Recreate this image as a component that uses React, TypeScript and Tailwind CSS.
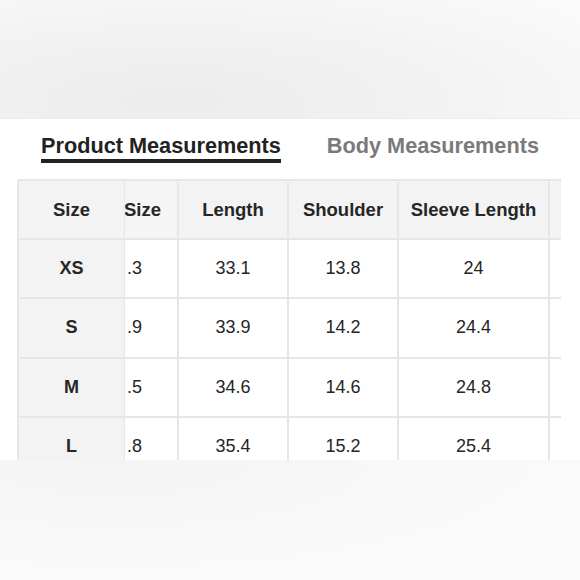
import React from "react";

const rows = [
  { size: "XS", clip: ".3", length: "33.1", shoulder: "13.8", sleeve: "24" },
  { size: "S", clip: ".9", length: "33.9", shoulder: "14.2", sleeve: "24.4" },
  { size: "M", clip: ".5", length: "34.6", shoulder: "14.6", sleeve: "24.8" },
  { size: "L", clip: ".8", length: "35.4", shoulder: "15.2", sleeve: "25.4" },
];

export default function App() {
  return (
    <div
      className="w-[580px] h-[580px] flex flex-col overflow-hidden bg-white text-[#262626]"
      style={{ fontFamily: '"Liberation Sans", Arial, Helvetica, sans-serif' }}
    >
      <div className="h-[119px] shrink-0 bg-[radial-gradient(ellipse_90%_120%_at_30%_85%,#ececec_0%,#f2f2f2_50%,#fafafa_100%)] border-b border-[#ebebeb]" />
      <div className="h-[341px] shrink-0 overflow-hidden bg-white">
        <div className="flex items-start pl-[41px] pt-[15px] gap-[46px]">
          <div className="text-[21.7px] leading-[24px] font-bold text-[#222] pb-[1px] border-b-4 border-[#222]">
            Product Measurements
          </div>
          <div className="text-[21.7px] leading-[24px] font-bold text-[#7a7a7a]">
            Body Measurements
          </div>
        </div>
        <div className="mt-[16px] ml-[17px] w-[544px] overflow-hidden">
          <div className="flex flex-col border-t-2 border-l-2 border-[#e6e6e6] w-[600px]">
            <div className="flex h-[59px] bg-[#f3f3f3] text-[18.5px] font-bold pt-[1px]">
              <div className="w-[106px] shrink-0 flex items-center justify-center border-r border-b-2 border-[#e6e6e6]">Size</div>
              <div className="w-[54px] shrink-0 flex items-center justify-start overflow-hidden border-r-2 border-b-2 border-[#e6e6e6] bg-[#f5f5f5]">
                <span className="-ml-[1px]">Size</span>
              </div>
              <div className="w-[110px] shrink-0 flex items-center justify-center border-r-2 border-b-2 border-[#e6e6e6]">Length</div>
              <div className="w-[110px] shrink-0 flex items-center justify-center border-r-2 border-b-2 border-[#e6e6e6]">Shoulder</div>
              <div className="w-[151px] shrink-0 flex items-center justify-center border-r-2 border-b-2 border-[#e6e6e6]">Sleeve Length</div>
              <div className="w-[40px] shrink-0 border-b-2 border-[#e6e6e6]" />
            </div>
            {rows.map((r) => (
              <div key={r.size} className="flex h-[59.3px] text-[18px]">
                <div className="w-[106px] shrink-0 flex items-center justify-center font-bold bg-[#f3f3f3] border-r border-b-2 border-[#e6e6e6]">
                  {r.size}
                </div>
                <div className="w-[54px] shrink-0 flex items-center justify-start pl-[2px] bg-white border-r-2 border-b-2 border-[#e6e6e6]">
                  {r.clip}
                </div>
                <div className="w-[110px] shrink-0 flex items-center justify-center bg-white border-r-2 border-b-2 border-[#e6e6e6]">{r.length}</div>
                <div className="w-[110px] shrink-0 flex items-center justify-center bg-white border-r-2 border-b-2 border-[#e6e6e6]">{r.shoulder}</div>
                <div className="w-[151px] shrink-0 flex items-center justify-center bg-white border-r-2 border-b-2 border-[#e6e6e6]">{r.sleeve}</div>
                <div className="w-[40px] shrink-0 bg-white border-b-2 border-[#e6e6e6]" />
              </div>
            ))}
          </div>
        </div>
      </div>
      <div className="flex-1 bg-[radial-gradient(ellipse_80%_100%_at_20%_0%,#f4f4f4_0%,#f8f8f8_60%,#fafafa_100%)]" />
    </div>
  );
}
